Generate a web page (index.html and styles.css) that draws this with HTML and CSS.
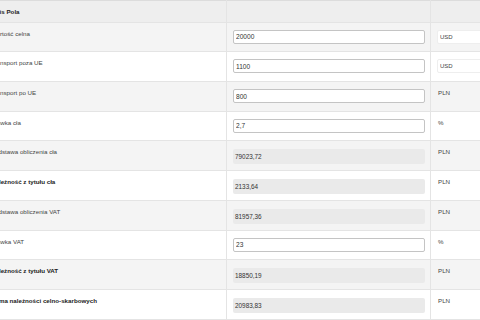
FILE: index.html
```html
<!DOCTYPE html>
<html lang="pl">

<head>
    <meta charset="UTF-8">
    <meta name="viewport" content="width=device-width, initial-scale=1.0">
    <title>Kalkulator celny</title>
    <link rel="stylesheet" href="styles.css">
</head>

<body>
    <table class="calc">
        <tr class="head">
            <th class="name">Opis Pola</th>
            <th class="value"></th>
            <th class="unit"></th>
        </tr>
        <tr>
            <td class="name">Wartość celna</td>
            <td class="value"><input type="text" value="20000"></td>
            <td class="unit"><select><option>USD</option></select></td>
        </tr>
        <tr>
            <td class="name">Transport poza UE</td>
            <td class="value"><input type="text" value="1100"></td>
            <td class="unit"><select><option>USD</option></select></td>
        </tr>
        <tr>
            <td class="name">Transport po UE</td>
            <td class="value"><input type="text" value="800"></td>
            <td class="unit">PLN</td>
        </tr>
        <tr>
            <td class="name">Stawka cła</td>
            <td class="value"><input type="text" value="2,7"></td>
            <td class="unit">%</td>
        </tr>
        <tr>
            <td class="name">Podstawa obliczenia cła</td>
            <td class="value"><div class="result">79023,72</div></td>
            <td class="unit">PLN</td>
        </tr>
        <tr>
            <td class="name bold">Należność z tytułu cła</td>
            <td class="value"><div class="result">2133,64</div></td>
            <td class="unit">PLN</td>
        </tr>
        <tr>
            <td class="name">Podstawa obliczenia VAT</td>
            <td class="value"><div class="result">81957,36</div></td>
            <td class="unit">PLN</td>
        </tr>
        <tr>
            <td class="name">Stawka VAT</td>
            <td class="value"><input type="text" value="23"></td>
            <td class="unit">%</td>
        </tr>
        <tr>
            <td class="name bold">Należność z tytułu VAT</td>
            <td class="value"><div class="result">18850,19</div></td>
            <td class="unit">PLN</td>
        </tr>
        <tr>
            <td class="name bold">Suma należności celno-skarbowych</td>
            <td class="value"><div class="result">20983,83</div></td>
            <td class="unit">PLN</td>
        </tr>
    </table>
</body>

</html>
```

FILE: styles.css
```css
body {
    margin: 0;
    overflow: hidden;
    font-family: "Liberation Sans", Arial, sans-serif;
    font-size: 6.2px;
    color: #444;
    background: #fff;
}

.calc {
    margin-left: -17px;
    border-collapse: collapse;
    table-layout: fixed;
    width: 560px;
    border-top: 1px solid #dcdcdc;
}

.calc th,
.calc td {
    padding: 7px 6px 0 7px;
    vertical-align: top;
    text-align: left;
    line-height: 7px;
    border-bottom: 1px solid #e4e4e4;
    border-left: 1px solid #e4e4e4;
    box-sizing: border-box;
}

.calc tr {
    height: 29.7px;
}

.calc tr.head {
    height: 21.7px;
}

.head th {
    background: #eeeeee;
    color: #222;
    font-weight: bold;
    vertical-align: middle;
    padding-top: 0;
}

.calc tr:nth-child(even) td {
    background: #f4f4f4;
}

.name {
    width: 243px;
    white-space: nowrap;
}

.value {
    width: 204px;
    padding-left: 6px !important;
}

.unit {
    width: 113px;
}

.bold {
    font-weight: bold;
    color: #222;
}

input[type="text"] {
    display: block;
    width: 192px;
    height: 14px;
    box-sizing: border-box;
    margin: 0;
    padding: 0 2px;
    border: 1px solid #c4c4c4;
    border-radius: 2px;
    background: #fff;
    font-family: "Liberation Sans", Arial, sans-serif;
    font-size: 6.6px;
    color: #333;
}

.result {
    width: 192px;
    height: 15px;
    line-height: 15px;
    margin-top: 1px;
    padding: 0 2px;
    box-sizing: border-box;
    background: #eaeaea;
    border-radius: 2px;
    color: #333;
    font-size: 6.4px;
}

select {
    display: block;
    width: 100px;
    height: 14px;
    margin: 0 0 0 -1px;
    padding: 0 2px;
    border: 1px solid #eeeeee;
    border-radius: 2px;
    background: #fff;
    font-family: "Liberation Sans", Arial, sans-serif;
    font-size: 6px;
    color: #444;
    appearance: none;
}
```
